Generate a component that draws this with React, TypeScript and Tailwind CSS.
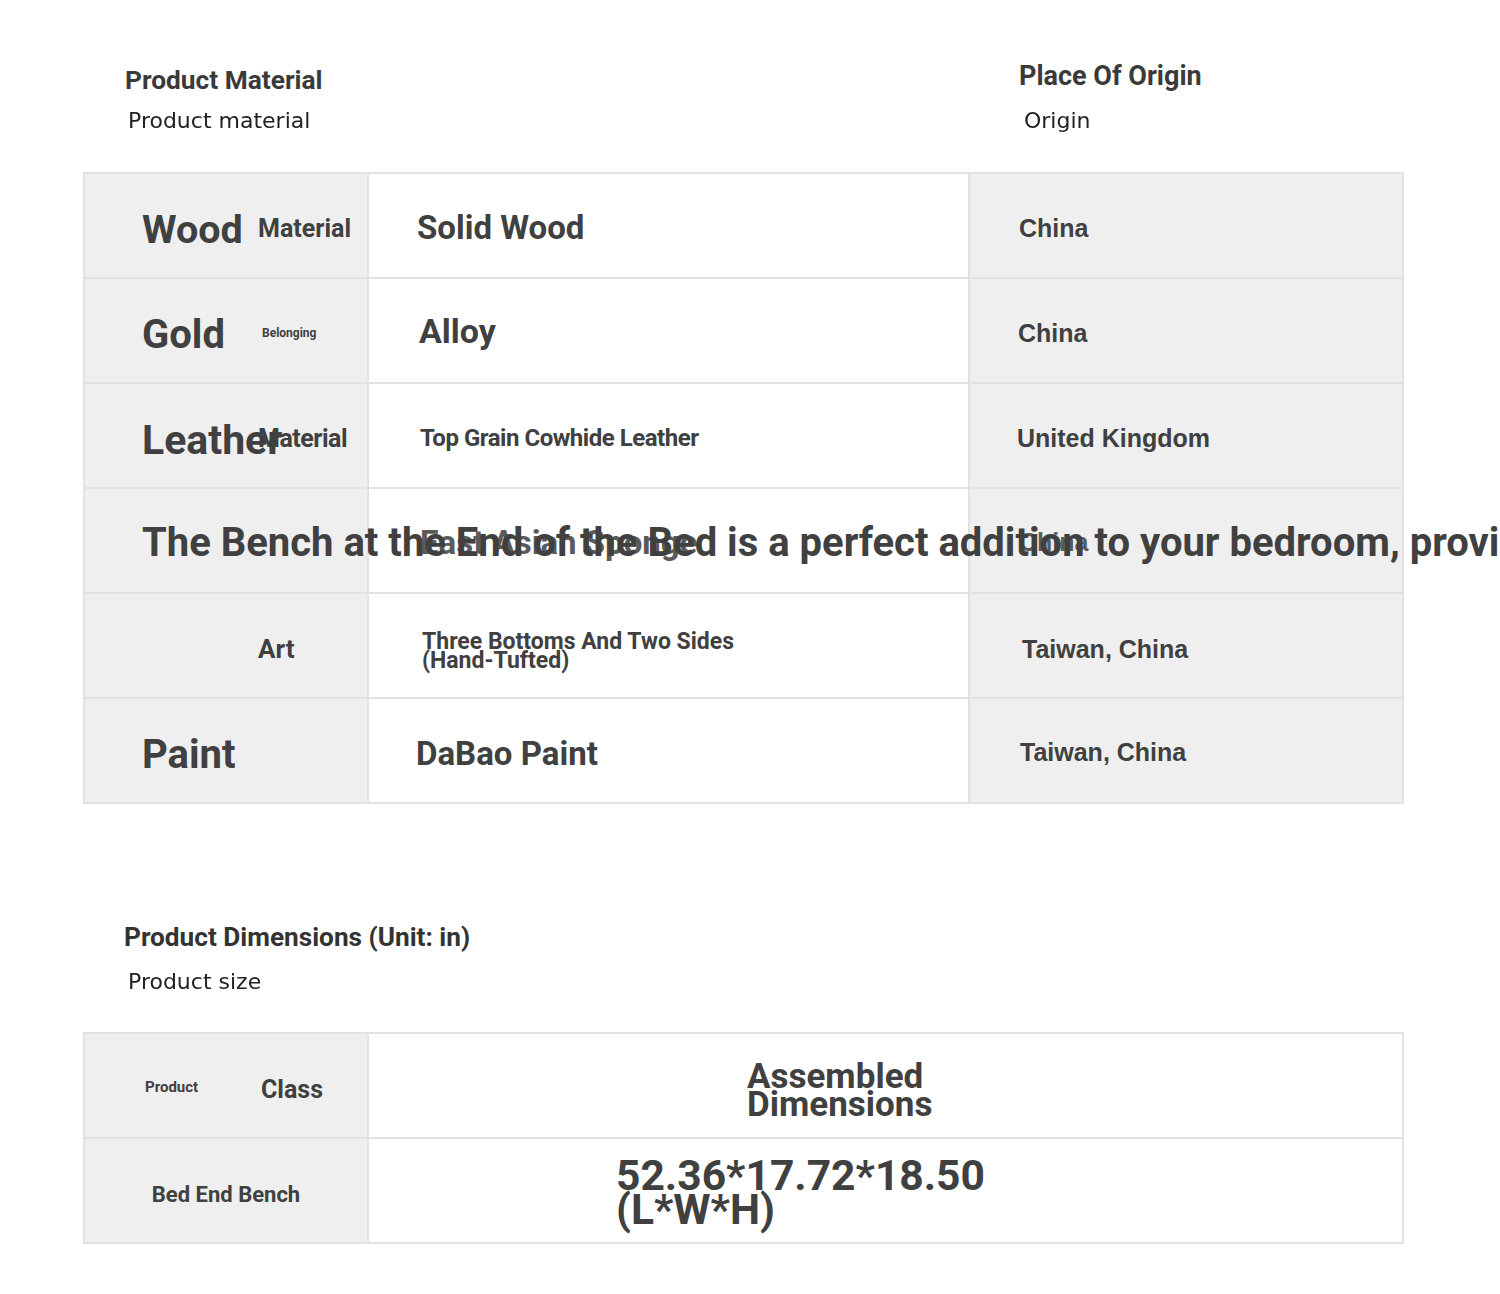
import React from "react";

const rows = [
	{
		big: "Wood",
		bigCls: "text-[39.5px] translate-y-[4px]",
		label: "Material",
		labelCls: "text-[25px] translate-y-[3px]",
		mid: "Solid Wood",
		midCls: "text-[33px] pl-[48px] translate-y-[2px]",
		origin: "China",
		originCls: "pl-[49px] translate-y-[3px]",
	},
	{
		big: "Gold",
		bigCls: "text-[40px] translate-y-[4px]",
		label: "Belonging",
		labelCls: "text-[12px] pl-[4px] translate-y-[2px]",
		mid: "Alloy",
		midCls: "text-[34px] pl-[50px] translate-y-[1px]",
		origin: "China",
		originCls: "pl-[48px] translate-y-[3px]",
	},
	{
		big: "Leather",
		bigCls: "text-[41px] translate-y-[5px]",
		label: "Material",
		labelCls: "text-[25px] tracking-[-0.02em] translate-y-[3px]",
		mid: "Top Grain Cowhide Leather",
		midCls: "text-[24px] pl-[51px] tracking-[-0.02em] translate-y-[2px]",
		origin: "United Kingdom",
		originCls: "pl-[47px] translate-y-[3px]",
	},
	{
		big: "The Bench at the End of the Bed is a perfect addition to your bedroom, providing extra seating and storage.",
		bigCls: "text-[40px] relative z-10 translate-y-[2px]",
		label: "",
		labelCls: "text-[25px]",
		mid: "East Asian Sponge",
		midCls: "text-[33px] pl-[51px] text-[#5a5a5a] translate-y-[2px]",
		origin: "China",
		originCls: "pl-[49px] text-[#5a5a5a] translate-y-[2px]",
	},
	{
		big: "",
		bigCls: "text-[40px]",
		label: "Art",
		labelCls: "text-[26px] translate-y-[4px]",
		mid: "Three Bottoms And Two Sides\n(Hand-Tufted)",
		midCls: "text-[23px] leading-[19px] pl-[53px] whitespace-pre-line translate-y-[5px]",
		origin: "Taiwan, China",
		originCls: "pl-[52px] translate-y-[4px]",
	},
	{
		big: "Paint",
		bigCls: "text-[40px] translate-y-[4px]",
		label: "",
		labelCls: "text-[25px]",
		mid: "DaBao Paint",
		midCls: "text-[33px] pl-[47px] translate-y-[3px]",
		origin: "Taiwan, China",
		originCls: "pl-[50px] translate-y-[2px]",
	},
];

function Heading({ title, sub, titleCls, subCls }: { title: string; sub: string; titleCls: string; subCls: string }) {
	return (
		<div className="flex flex-col">
			<h2 className={`leading-[32px] font-bold text-[#3a3a3a] ${titleCls}`}>{title}</h2>
			<p
				className={`pl-[3px] text-[22px] leading-[30px] font-['DejaVu_Sans',sans-serif] text-[#222] blur-[0.7px] ${subCls}`}
			>
				{sub}
			</p>
		</div>
	);
}

export default function App() {
	return (
		<div className="w-[1500px] h-[1294px] overflow-hidden bg-white font-[Roboto,sans-serif] text-[#404040]">
			{/* material header */}
			<div className="flex h-[172px] ml-[83px]">
				<div className="w-[894px] pl-[42px] pt-[64px]">
					<Heading title="Product Material" sub="Product material" titleCls="text-[26.3px]" subCls="mt-[10px]" />
				</div>
				<div className="pl-[42px] pt-[60px]">
					<Heading title="Place Of Origin" sub="Origin" titleCls="text-[27px]" subCls="mt-[14px] pl-[5px]" />
				</div>
			</div>

			{/* material table */}
			<div className="ml-[83px] w-[1321px] grid grid-cols-[282px_599px_432px] auto-rows-[103px] gap-[2px] border-2 border-[#e2e2e2] bg-[#e2e2e2] font-bold">
				{rows.map((r, i) => (
					<React.Fragment key={i}>
						<div className="bg-[#efefef] flex items-center">
							<div className="grid grid-cols-[116px_auto] items-center pl-[57px] whitespace-nowrap">
								<span className={r.bigCls}>{r.big}</span>
								<span className={r.labelCls}>{r.label}</span>
							</div>
						</div>
						<div className="bg-white flex items-center whitespace-nowrap">
							<span className={r.midCls}>{r.mid}</span>
						</div>
						<div className="bg-[#efefef] flex items-center">
							<span className={`font-['Liberation_Sans',Arial,sans-serif] text-[25px] ${r.originCls}`}>
								{r.origin}
							</span>
						</div>
					</React.Fragment>
				))}
			</div>

			{/* dimensions header */}
			<div className="ml-[83px] h-[228px] pt-[117px] pl-[41px]">
				<div className="flex flex-col">
					<h2 className="text-[26.2px] leading-[32px] font-bold text-[#333]">Product Dimensions (Unit: in)</h2>
					<p className="mt-[14px] pl-[4px] text-[22px] leading-[30px] font-['DejaVu_Sans',sans-serif] text-[#222] blur-[0.7px]">
						Product size
					</p>
				</div>
			</div>

			{/* dimensions table */}
			<div className="ml-[83px] w-[1321px] grid grid-cols-[282px_1fr] auto-rows-[103px] gap-[2px] border-2 border-[#e2e2e2] bg-[#e2e2e2] font-bold">
				<div className="bg-[#efefef] flex items-center pl-[60px]">
					<span className="w-[116px] text-[15px] translate-y-[2px]">Product</span>
					<span className="text-[25px] translate-y-[4px]">Class</span>
				</div>
				<div className="bg-white flex items-center pl-[378px]">
					<span className="text-[35px] leading-[28px] translate-y-[5px]">
						Assembled
						<br />
						Dimensions
					</span>
				</div>
				<div className="bg-[#efefef] flex items-center justify-center">
					<span className="text-[22px] translate-y-[4px]">Bed End Bench</span>
				</div>
				<div className="bg-white flex items-center pl-[247px]">
					<span className="text-[42.6px] leading-[34px] translate-y-[1px]">
						52.36*17.72*18.50
						<br />
						(L*W*H)
					</span>
				</div>
			</div>
		</div>
	);
}
